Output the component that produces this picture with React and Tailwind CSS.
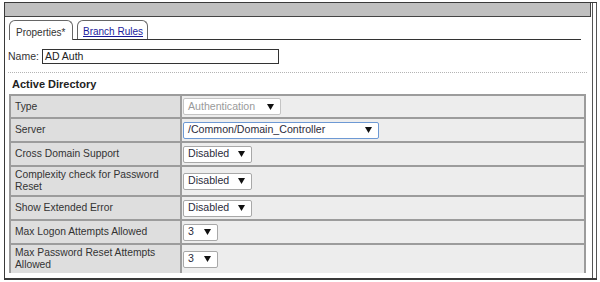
import React from "react";

const font = { fontFamily: '"Liberation Sans", Arial, sans-serif' };

const Arrow = () => (
  <svg width="7" height="6" viewBox="0 0 7 6" className="shrink-0">
    <path d="M0 0 H7 L3.5 6 Z" fill="#111" />
  </svg>
);

const Select = ({ w, text, muted, focus }) => (
  <div
    className={
      "flex items-center justify-between h-[17px] rounded-[2px] bg-white pl-[4px] pr-[6px] border text-[10.6px] " +
      (focus ? "border-[#6d99d4]" : muted ? "border-[#c4c4c4]" : "border-[#a8a8a8]")
    }
    style={{ width: w }}
  >
    <span className={muted ? "text-[#9a9a9a]" : "text-[#2b2b3b]"}>{text}</span>
    <Arrow />
  </div>
);

const rows = [
  { label: "Type", h: "h-[23px]", sel: <Select w={98} text="Authentication" muted /> },
  { label: "Server", h: "h-[24px]", sel: <Select w={196} text="/Common/Domain_Controller" focus /> },
  { label: "Cross Domain Support", h: "h-[24px]", sel: <Select w={69} text="Disabled" /> },
  { label: "Complexity check for Password Reset", h: "h-[30px]", sel: <Select w={69} text="Disabled" /> },
  { label: "Show Extended Error", h: "h-[24px]", sel: <Select w={69} text="Disabled" /> },
  { label: "Max Logon Attempts Allowed", h: "h-[24px]", sel: <Select w={35} text="3" /> },
  { label: "Max Password Reset Attempts Allowed", h: "h-[30px]", sel: <Select w={35} text="3" /> },
];

export default function App() {
  return (
    <div className="w-[600px] h-[282px] bg-white pl-[4px] pt-[2px] overflow-hidden text-[10.3px] text-[#333]" style={font}>
      <div className="w-[593px] h-[278px] flex border-l border-t border-b-2 border-[#3a3a3a]">
        {/* main column */}
        <div className="w-[586px] flex flex-col">
          <div className="h-[14px] bg-[#c0c0c0] border-b border-r border-[#444]" />
          <div className="flex-1 flex flex-col bg-white pt-[4px] pb-[5px] overflow-hidden">
            {/* tabs */}
            <div className="ml-[4px] mr-[10px] h-[19px] flex items-end gap-[4px] border-b border-[#333]">
              <div className="relative -mb-px h-[20px] w-[64px] bg-white border border-b-0 border-[#666] rounded-t-[6px] pl-[6px] pt-[4px] text-[10px] text-[#333]">
                Properties*
              </div>
              <div className="h-[19px] w-[71px] bg-white border border-b-0 border-[#666] rounded-t-[6px] pl-[5px] pt-[3px] text-[10px]">
                <span className="underline text-[#1c1c9c]">Branch Rules</span>
              </div>
            </div>

            {/* name */}
            <div className="mt-[9px] flex items-center h-[15px] pl-[3px] text-[10.5px]">
              <span>Name:</span>
              <div className="ml-[3px] w-[237px] h-[15px] border border-[#333] flex items-center pl-[2px] text-[#222]">
                AD Auth
              </div>
            </div>

            <div className="mt-[8px] ml-[3px] mr-[4px] border-t border-dotted border-[#b4b4b4]" />

            <div className="h-[21px] pt-[4px] pl-[7px] leading-[14px] text-[11px] font-bold text-[#222]">
              Active Directory
            </div>

            {/* table */}
            <div className="ml-[4px] mr-[5px] flex-1 overflow-hidden border-t-2 border-l-2 border-r-2 border-[#9c9c9c]">
              {rows.map((r) => (
                <div key={r.label} className={"flex border-b-2 border-[#9c9c9c] " + r.h}>
                  <div className="w-[171px] shrink-0 flex items-center bg-[#dedede] border-r-2 border-[#9c9c9c] pl-[4px] pr-[8px] leading-[12px]">
                    {r.label}
                  </div>
                  <div className="flex-1 flex items-center bg-[#ededed] pl-[1px]">{r.sel}</div>
                </div>
              ))}
            </div>
          </div>
        </div>
        {/* right frame edge */}
        <div className="w-[6px] pl-[1px] bg-white">
          <div className="w-[5px] h-full border-l border-r border-[#555]" />
        </div>
      </div>
    </div>
  );
}
